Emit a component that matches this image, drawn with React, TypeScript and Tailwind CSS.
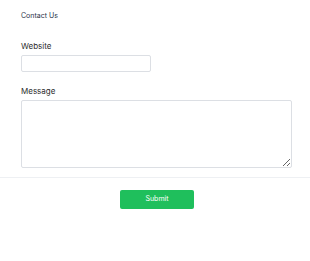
export default function App() {
  return (
    <div className="min-h-screen bg-white font-['Inter',sans-serif]">
      <div className="px-[21px] pt-[11px]">
        <p className="text-[7px] leading-[9px] text-[#2a3348]">Contact Us</p>

        <div className="mt-[21px]">
          <label className="block text-[8px] leading-[10px] text-[#2d2d2d]">Website</label>
          <input
            type="text"
            className="mt-[4px] block h-[17px] w-[130px] rounded-[2px] border border-[#dcdfe4] bg-white"
          />
        </div>

        <div className="mt-[14px]">
          <label className="block text-[8px] leading-[10px] text-[#2d2d2d]">Message</label>
          <textarea className="mt-[4px] block h-[68px] w-[271px] rounded-[2px] border border-[#dcdfe4] bg-white" />
        </div>
      </div>

      <div className="mt-[9px] border-t border-[#eef0f3]" />

      <div className="flex justify-center pt-[12px] pl-[4px]">
        <button className="h-[19px] w-[74px] rounded-[2px] bg-[#1fbf5c] text-[7px] text-white">
          Submit
        </button>
      </div>
    </div>
  );
}
